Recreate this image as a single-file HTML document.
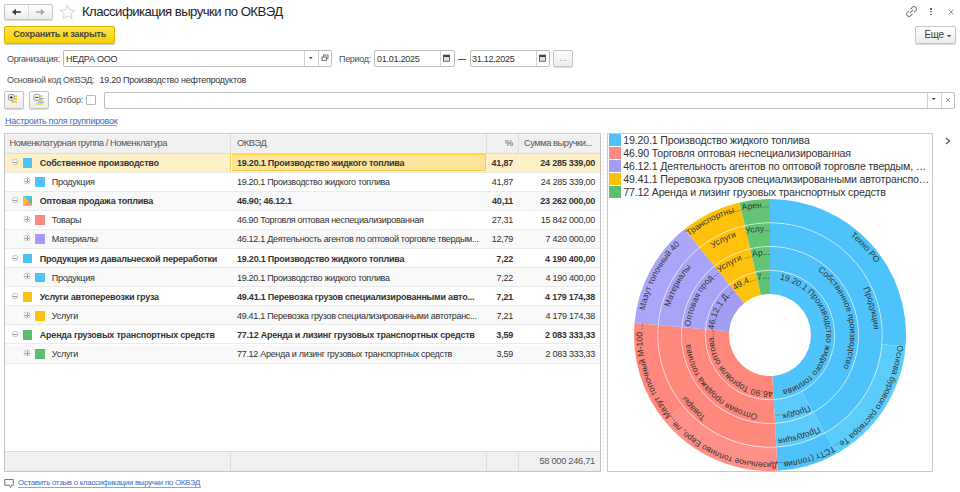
<!DOCTYPE html>
<html><head><meta charset="utf-8"><title>Классификация выручки по ОКВЭД</title>
<style>
*{box-sizing:border-box;margin:0;padding:0}
html,body{width:960px;height:492px;overflow:hidden;background:#fff}
body{position:relative;font-family:"Liberation Sans",sans-serif;color:#333;font-size:9px}
.a{position:absolute;white-space:nowrap}
.btn{position:absolute;border:1px solid #c4c4c4;border-radius:2px;background:linear-gradient(#fff,#ececec);box-shadow:0 1px 1px rgba(0,0,0,.15)}
.inp{position:absolute;border:1px solid #bdbdbd;border-radius:2px;background:#fff}
.lbl9{position:absolute;white-space:nowrap;font-size:9px;letter-spacing:-0.33px;color:#505050;line-height:1}
.txt{position:absolute;white-space:nowrap;font-size:9px;letter-spacing:-0.25px;color:#333;line-height:1}
.vd{position:absolute;top:0;bottom:0;width:1px;background:#d0d0d0}
/* table */
.tbl{position:absolute;left:4px;top:132.5px;width:597px;height:339.5px;border:1px solid #c4c4c4;border-top:1.5px solid #c8c8c8;background:#fff;overflow:hidden}
.hdr{position:absolute;left:0;top:0;width:595px;height:20px;background:#f0f0f0;border-bottom:1px solid #dcdce0;box-shadow:inset 0 1px #fafafa}
.hc{position:absolute;top:0;height:20px;border-right:1px solid #dedede}
.ht{position:absolute;top:5px;font-size:9.3px;letter-spacing:-0.45px;color:#555;line-height:1;white-space:nowrap}
.row{position:absolute;left:0;width:595px;height:19.1px;border-bottom:1px solid #ebebeb;background:#fff}
.row.alt{background:#f9f9f9}
.row.sel{background:#fef0c6}
.row>div{position:absolute;white-space:nowrap;line-height:1}
.c1,.c2,.c3,.c4{top:5.5px;font-size:9px;letter-spacing:-0.25px;color:#303030}
.b{font-weight:bold;letter-spacing:-0.22px;color:#333}
.c2{left:232px;letter-spacing:-0.3px}
.c2.b{letter-spacing:-0.22px}
.c3{right:87px;text-align:right}
.c4{right:5px;text-align:right}
.row>.cur{position:absolute;left:225px;top:0.5px;width:256px;height:16.8px;border:1.5px solid #fccf3a;background:#fde59d}
.row>.cl{position:absolute;top:0;width:1px;height:18px;background:#fbf7ea}
.sq{position:absolute;top:4.6px;width:9.6px;height:9.8px}
.tog{position:absolute;top:5.5px}
.ftr{position:absolute;left:0;top:317.4px;width:595px;height:20px;background:#f0f0f0;border-top:1px solid #d9d9d9}
/* chart */
.cbox{position:absolute;left:607px;top:132.5px;width:326px;height:339.5px;border:1px solid #c9c9c9;background:#fff}
.chart{position:absolute;left:0;top:0}
.lbl text{font-size:8.5px;fill:#333;letter-spacing:0px;text-anchor:middle}
.li{position:absolute;left:609.3px;height:12px}
.ls{position:absolute;left:0;top:0;width:11.6px;height:11.6px}
.lt{position:absolute;left:14px;top:1px;font-size:10.6px;letter-spacing:-0.17px;color:#333;white-space:nowrap;line-height:1}
</style></head><body>
<!-- nav -->
<div class="btn" style="left:4px;top:4px;width:48.5px;height:15.5px"></div>
<div class="a" style="left:28px;top:5px;width:1px;height:13.5px;background:#dcdcdc"></div>
<svg class="a" style="left:11px;top:8px" width="11" height="8" viewBox="0 0 11 8"><path d="M1,4L5,0.8V7.2Z" fill="#3c3c3c"/><path d="M4,4H9.8" stroke="#3c3c3c" stroke-width="1.6"/></svg>
<svg class="a" style="left:34.5px;top:8px" width="11" height="8" viewBox="0 0 11 8"><path d="M9.8,4L5.8,0.8V7.2Z" fill="#a8a8a8"/><path d="M1,4H6.8" stroke="#a8a8a8" stroke-width="1.6"/></svg>
<svg class="a" style="left:59px;top:4px" width="17" height="16" viewBox="0 0 17 16"><path d="M8.5,1L10.6,6L15.9,6.3L11.8,9.7L13.1,14.8L8.5,11.9L3.9,14.8L5.2,9.7L1.1,6.3L6.4,6Z" fill="none" stroke="#c4c4c4" stroke-width="0.8"/></svg>
<div class="a" style="left:82px;top:5.2px;font-size:13.2px;letter-spacing:-0.56px;color:#222;line-height:1">Классификация выручки по ОКВЭД</div>
<!-- top right icons -->
<svg class="a" style="left:905.5px;top:5.8px" width="11" height="11" viewBox="0 0 12 12"><g fill="none" stroke="#777" stroke-width="1.1"><path d="M5,3.3L6.8,1.5A1.8,1.8 0 0 1 10.5,5.2L8.7,7"/><path d="M7,8.7L5.2,10.5A1.8,1.8 0 0 1 1.5,6.8L3.3,5"/><path d="M4.2,7.8L7.8,4.2"/></g></svg>
<div class="a" style="left:930.3px;top:8.2px;width:1.6px;height:1.6px;background:#666"></div>
<div class="a" style="left:930.3px;top:10.9px;width:1.6px;height:1.6px;background:#666"></div>
<div class="a" style="left:930.3px;top:13.5px;width:1.6px;height:1.6px;background:#666"></div>
<svg class="a" style="left:947.5px;top:8.5px" width="6" height="6" viewBox="0 0 6 6"><path d="M0.6,0.6L5.4,5.4M5.4,0.6L0.6,5.4" stroke="#777" stroke-width="0.8"/></svg>
<!-- command bar -->
<div class="a" style="left:4px;top:26px;width:111px;height:17.5px;border:1px solid #d9b400;border-radius:2px;background:linear-gradient(#ffe44d,#f5d000);box-shadow:0 1px 1px rgba(0,0,0,.2)"></div>
<div class="a" style="left:13.2px;top:30.3px;font-size:9.2px;letter-spacing:-0.25px;color:#4a4a3c;line-height:1;font-weight:bold">Сохранить и закрыть</div>
<div class="btn" style="left:915px;top:26px;width:40.5px;height:17.5px"></div>
<div class="a" style="left:924.5px;top:30px;font-size:9.8px;letter-spacing:-0.3px;color:#3a3a3a;line-height:1;transform:scaleY(1.06);transform-origin:0 100%">Еще</div>
<svg class="a" style="left:947px;top:34.5px" width="4" height="2.5" viewBox="0 0 4 2.5"><path d="M0,0H4L2,2.5Z" fill="#444"/></svg>
<!-- org row -->
<div class="lbl9" style="left:7px;top:55px">Организация:</div>
<div class="inp" style="left:63px;top:50px;width:269px;height:17px"></div>
<div class="a" style="left:303.8px;top:51px;width:1px;height:15px;background:#d0d0d0"></div>
<div class="a" style="left:317.5px;top:51px;width:1px;height:15px;background:#d0d0d0"></div>
<div class="txt" style="left:66px;top:54.6px;color:#333">НЕДРА ООО</div>
<svg class="a" style="left:309.3px;top:57px" width="3.6" height="2.2" viewBox="0 0 4 2.4"><path d="M0,0H4L2,2.4Z" fill="#444"/></svg>
<svg class="a" style="left:321px;top:54px" width="8" height="8" viewBox="0 0 8 8"><g fill="none" stroke="#666" stroke-width="0.9"><rect x="2.5" y="1" width="4.5" height="3.5"/><rect x="1" y="3" width="4.5" height="3.5" fill="#fff"/></g></svg>
<div class="lbl9" style="left:339px;top:54.8px">Период:</div>
<div class="inp" style="left:374px;top:50px;width:80.5px;height:17px"></div>
<div class="a" style="left:440px;top:51px;width:1px;height:15px;background:#d0d0d0"></div>
<div class="txt" style="left:377px;top:54.6px">01.01.2025</div>
<svg class="a" style="left:443.3px;top:53.6px" width="7" height="8" viewBox="0 0 7 8"><path d="M2,0.2V1.5M5,0.2V1.5" stroke="#666" stroke-width="0.7"/><rect x="0.5" y="1.2" width="6" height="6" fill="#e6e6e6" stroke="#444" stroke-width="0.8"/><rect x="0.5" y="1.2" width="6" height="1.8" fill="#3a3a3a"/><path d="M0.8,5H6.2M3.5,3V7" stroke="#c8c8c8" stroke-width="0.5"/></svg>
<div class="a" style="left:458px;top:58.8px;width:8px;height:1px;background:#555"></div>
<div class="inp" style="left:469.5px;top:50px;width:80px;height:17px"></div>
<div class="a" style="left:536px;top:51px;width:1px;height:15px;background:#d0d0d0"></div>
<div class="txt" style="left:472px;top:54.6px">31.12.2025</div>
<svg class="a" style="left:538.8px;top:53.6px" width="7" height="8" viewBox="0 0 7 8"><path d="M2,0.2V1.5M5,0.2V1.5" stroke="#666" stroke-width="0.7"/><rect x="0.5" y="1.2" width="6" height="6" fill="#e6e6e6" stroke="#444" stroke-width="0.8"/><rect x="0.5" y="1.2" width="6" height="1.8" fill="#3a3a3a"/><path d="M0.8,5H6.2M3.5,3V7" stroke="#c8c8c8" stroke-width="0.5"/></svg>
<div class="btn" style="left:553px;top:50px;width:19.5px;height:17px"></div>
<div class="a" style="left:559.5px;top:54.5px;font-size:8px;letter-spacing:0.3px;color:#777;line-height:1">...</div>
<!-- okved main -->
<div class="lbl9" style="left:7px;top:76px">Основной код ОКВЭД:</div>
<div class="txt" style="left:99.5px;top:76px;color:#333">19.20 Производство нефтепродуктов</div>
<!-- toolbar -->
<div class="btn" style="left:4.3px;top:91px;width:19.5px;height:17.5px"></div>
<svg class="a" style="left:4px;top:91px" width="20" height="18" viewBox="0 0 20 18"><rect x="10.2" y="4.5" width="2.9" height="1.7" fill="#f2cf10"/><rect x="10.2" y="7.2" width="2.9" height="1.7" fill="#f2cf10"/><rect x="7.2" y="10" width="5.9" height="1.7" fill="#f2cf10"/><rect x="4.4" y="3.6" width="5.6" height="5.6" rx="1" fill="#fff" stroke="#8a8a8a" stroke-width="0.9"/><path d="M5.6,6.4H8.8M7.2,4.8V8" stroke="#111" stroke-width="0.9"/></svg>
<div class="btn" style="left:29.2px;top:91px;width:19.5px;height:17.5px"></div>
<svg class="a" style="left:29px;top:91px" width="20" height="18" viewBox="0 0 20 18"><rect x="11" y="4.3" width="2.8" height="1.5" fill="#f2cf10"/><rect x="11" y="6.9" width="4" height="1.1" fill="#64b5f0"/><rect x="11" y="8.2" width="2.8" height="1.5" fill="#f2cf10"/><rect x="8.9" y="10.5" width="6" height="1.3" fill="#64b5f0"/><rect x="7.6" y="12.3" width="6.3" height="1.4" fill="#f2cf10"/><path d="M7.5,9.5V13" stroke="#bbb" stroke-width="0.6"/><rect x="5" y="3.6" width="5.8" height="5.6" rx="1" fill="#fff" stroke="#8a8a8a" stroke-width="0.9"/><path d="M6.3,6.4H9.5" stroke="#111" stroke-width="0.9"/></svg>
<div class="lbl9" style="left:56px;top:96px">Отбор:</div>
<div class="a" style="left:86px;top:95px;width:9.8px;height:9.8px;border:1px solid #b5b5b5;border-radius:1px;background:#fff"></div>
<div class="inp" style="left:103.5px;top:92px;width:851.5px;height:16.5px"></div>
<div class="a" style="left:927px;top:93px;width:1px;height:14.5px;background:#d0d0d0"></div>
<div class="a" style="left:941px;top:93px;width:1px;height:14.5px;background:#d0d0d0"></div>
<svg class="a" style="left:932.4px;top:98.3px" width="3.6" height="2" viewBox="0 0 4 2.2"><path d="M0,0H4L2,2.2Z" fill="#333"/></svg>
<svg class="a" style="left:945.3px;top:96.8px" width="6" height="6" viewBox="0 0 6 6"><path d="M1,1L5,5M5,1L1,5" stroke="#666" stroke-width="0.7"/></svg>
<!-- link -->
<div class="a" style="left:5px;top:116.7px;font-size:9px;letter-spacing:-0.29px;color:#3d6cbf;line-height:1">Настроить поля группировок</div><div class="a" style="left:5px;top:125px;width:112px;height:1px;background:#8aa6d8"></div>
<!-- table -->
<div class="tbl">
 <div class="hdr">
  <div class="hc" style="left:0;width:226px"></div>
  <div class="hc" style="left:226px;width:256px"></div>
  <div class="hc" style="left:482px;width:32px"></div>
  <div class="ht" style="left:4.5px">Номенклатурная группа / Номенклатура</div>
  <div class="ht" style="left:232px">ОКВЭД</div>
  <div class="ht" style="left:500px">%</div>
  <div class="ht" style="left:519px">Сумма выручки...</div>
 </div>
 <div style="position:absolute;left:0;top:-134px">
 <div class="row sel" style="top:154.0px"><div class="cur"></div><div class="cl" style="left:225.5px"></div><div class="cl" style="left:481.5px"></div><div class="cl" style="left:513.5px"></div><svg class="tog" style="left:5.75px;top:4.5px" width="8" height="8" viewBox="0 0 8 8"><circle cx="4" cy="4" r="2.9" fill="#fff" fill-opacity="0.4" stroke="#bbb" stroke-width="0.8"/><path d="M2.3,4H5.7" stroke="#9a9a9a" stroke-width="1" shape-rendering="crispEdges"/></svg><div class="sq" style="left:17.8px;background:#4fc3f7"></div><div class="c1 b" style="left:34.8px">Собственное производство</div><div class="c2 b">19.20.1 Производство жидкого топлива</div><div class="c3 b">41,87</div><div class="c4 b">24 285 339,00</div></div><div class="row" style="top:173.1px"><svg class="tog" style="left:18.2px;top:4.3px" width="8" height="8" viewBox="0 0 8 8"><circle cx="4" cy="4" r="3" fill="none" stroke="#bbb" stroke-width="0.8"/><path d="M2.3,4H5.7M4,2.3V5.7" stroke="#9a9a9a" stroke-width="1" shape-rendering="crispEdges"/></svg><div class="sq" style="left:30.1px;background:#4fc3f7"></div><div class="c1" style="left:46.8px">Продукция</div><div class="c2">19.20.1 Производство жидкого топлива</div><div class="c3">41,87</div><div class="c4">24 285 339,00</div></div><div class="row alt" style="top:192.2px"><svg class="tog" style="left:5.75px;top:4.5px" width="8" height="8" viewBox="0 0 8 8"><circle cx="4" cy="4" r="2.9" fill="#fff" fill-opacity="0.4" stroke="#bbb" stroke-width="0.8"/><path d="M2.3,4H5.7" stroke="#9a9a9a" stroke-width="1" shape-rendering="crispEdges"/></svg><svg class="sq" style="left:17.8px" width="10" height="10" viewBox="0 0 10 10"><path d="M0,0H10L5,5Z" fill="#4fc3f7"/><path d="M10,0V10L5,5Z" fill="#5cbf6f"/><path d="M0,10H10L5,5Z" fill="#ff8a80"/><path d="M0,0V10L5,5Z" fill="#ffc107"/></svg><div class="c1 b" style="left:34.8px">Оптовая продажа топлива</div><div class="c2 b">46.90; 46.12.1</div><div class="c3 b">40,11</div><div class="c4 b">23 262 000,00</div></div><div class="row" style="top:211.3px"><svg class="tog" style="left:18.2px;top:4.3px" width="8" height="8" viewBox="0 0 8 8"><circle cx="4" cy="4" r="3" fill="none" stroke="#bbb" stroke-width="0.8"/><path d="M2.3,4H5.7M4,2.3V5.7" stroke="#9a9a9a" stroke-width="1" shape-rendering="crispEdges"/></svg><div class="sq" style="left:30.1px;background:#ff8a80"></div><div class="c1" style="left:46.8px">Товары</div><div class="c2">46.90 Торговля оптовая неспециализированная</div><div class="c3">27,31</div><div class="c4">15 842 000,00</div></div><div class="row alt" style="top:230.4px"><svg class="tog" style="left:18.2px;top:4.3px" width="8" height="8" viewBox="0 0 8 8"><circle cx="4" cy="4" r="3" fill="none" stroke="#bbb" stroke-width="0.8"/><path d="M2.3,4H5.7M4,2.3V5.7" stroke="#9a9a9a" stroke-width="1" shape-rendering="crispEdges"/></svg><div class="sq" style="left:30.1px;background:#a29ef5"></div><div class="c1" style="left:46.8px">Материалы</div><div class="c2">46.12.1 Деятельность агентов по оптовой торговле твердым...</div><div class="c3">12,79</div><div class="c4">7 420 000,00</div></div><div class="row" style="top:249.5px"><svg class="tog" style="left:5.75px;top:4.5px" width="8" height="8" viewBox="0 0 8 8"><circle cx="4" cy="4" r="2.9" fill="#fff" fill-opacity="0.4" stroke="#bbb" stroke-width="0.8"/><path d="M2.3,4H5.7" stroke="#9a9a9a" stroke-width="1" shape-rendering="crispEdges"/></svg><div class="sq" style="left:17.8px;background:#4fc3f7"></div><div class="c1 b" style="left:34.8px">Продукция из давальческой переработки</div><div class="c2 b">19.20.1 Производство жидкого топлива</div><div class="c3 b">7,22</div><div class="c4 b">4 190 400,00</div></div><div class="row alt" style="top:268.6px"><svg class="tog" style="left:18.2px;top:4.3px" width="8" height="8" viewBox="0 0 8 8"><circle cx="4" cy="4" r="3" fill="none" stroke="#bbb" stroke-width="0.8"/><path d="M2.3,4H5.7M4,2.3V5.7" stroke="#9a9a9a" stroke-width="1" shape-rendering="crispEdges"/></svg><div class="sq" style="left:30.1px;background:#4fc3f7"></div><div class="c1" style="left:46.8px">Продукция</div><div class="c2">19.20.1 Производство жидкого топлива</div><div class="c3">7,22</div><div class="c4">4 190 400,00</div></div><div class="row" style="top:287.7px"><svg class="tog" style="left:5.75px;top:4.5px" width="8" height="8" viewBox="0 0 8 8"><circle cx="4" cy="4" r="2.9" fill="#fff" fill-opacity="0.4" stroke="#bbb" stroke-width="0.8"/><path d="M2.3,4H5.7" stroke="#9a9a9a" stroke-width="1" shape-rendering="crispEdges"/></svg><div class="sq" style="left:17.8px;background:#ffc107"></div><div class="c1 b" style="left:34.8px">Услуги автоперевозки груза</div><div class="c2 b">49.41.1 Перевозка грузов специализированными авто...</div><div class="c3 b">7,21</div><div class="c4 b">4 179 174,38</div></div><div class="row alt" style="top:306.8px"><svg class="tog" style="left:18.2px;top:4.3px" width="8" height="8" viewBox="0 0 8 8"><circle cx="4" cy="4" r="3" fill="none" stroke="#bbb" stroke-width="0.8"/><path d="M2.3,4H5.7M4,2.3V5.7" stroke="#9a9a9a" stroke-width="1" shape-rendering="crispEdges"/></svg><div class="sq" style="left:30.1px;background:#ffc107"></div><div class="c1" style="left:46.8px">Услуги</div><div class="c2">49.41.1 Перевозка грузов специализированными автотранс...</div><div class="c3">7,21</div><div class="c4">4 179 174,38</div></div><div class="row" style="top:325.9px"><svg class="tog" style="left:5.75px;top:4.5px" width="8" height="8" viewBox="0 0 8 8"><circle cx="4" cy="4" r="2.9" fill="#fff" fill-opacity="0.4" stroke="#bbb" stroke-width="0.8"/><path d="M2.3,4H5.7" stroke="#9a9a9a" stroke-width="1" shape-rendering="crispEdges"/></svg><div class="sq" style="left:17.8px;background:#5cbf6f"></div><div class="c1 b" style="left:34.8px">Аренда грузовых транспортных средств</div><div class="c2 b">77.12 Аренда и лизинг грузовых транспортных средств</div><div class="c3 b">3,59</div><div class="c4 b">2 083 333,33</div></div><div class="row alt" style="top:345.0px"><svg class="tog" style="left:18.2px;top:4.3px" width="8" height="8" viewBox="0 0 8 8"><circle cx="4" cy="4" r="3" fill="none" stroke="#bbb" stroke-width="0.8"/><path d="M2.3,4H5.7M4,2.3V5.7" stroke="#9a9a9a" stroke-width="1" shape-rendering="crispEdges"/></svg><div class="sq" style="left:30.1px;background:#5cbf6f"></div><div class="c1" style="left:46.8px">Услуги</div><div class="c2">77.12 Аренда и лизинг грузовых транспортных средств</div><div class="c3">3,59</div><div class="c4">2 083 333,33</div></div>
 </div>
 <div class="ftr">
  <div class="hc" style="left:0;width:226px;height:19px"></div>
  <div class="hc" style="left:226px;width:256px;height:19px"></div>
  <div class="hc" style="left:482px;width:32px;height:19px"></div>
  <div class="ht" style="right:5px;top:5.5px;letter-spacing:-0.3px;color:#555">58 000 246,71</div>
 </div>
</div>
<!-- splitter -->
<div class="a" style="left:603px;top:133px;width:1px;height:338px;background:repeating-linear-gradient(#e2e2e2 0,#e2e2e2 2px,transparent 2px,transparent 4px)"></div>
<!-- chart box -->
<div class="cbox"></div>
<svg class="chart" width="960" height="492" viewBox="0 0 960 492"><defs><path id="p0" d="M713.63,335.62A56.375,56.375 0 1 1 713.68,337.58"/><path id="p1" d="M811.17,296.49A56.375,56.375 0 1 1 809.80,295.07"/><path id="p2" d="M819.26,362.42A56.375,56.375 0 1 1 820.18,360.68"/><path id="p3" d="M793.74,386.13A56.375,56.375 0 1 1 795.51,385.27"/><path id="p4" d="M775.37,391.12A56.375,56.375 0 1 1 777.32,390.90"/><path id="p5" d="M692.13,353.88A80.125,80.125 0 1 1 692.84,356.59"/><path id="p6" d="M748.91,257.70A80.125,80.125 0 1 1 746.23,258.48"/><path id="p7" d="M828.51,280.26A80.125,80.125 0 1 1 826.57,278.25"/><path id="p8" d="M840.01,373.97A80.125,80.125 0 1 1 841.33,371.50"/><path id="p9" d="M803.74,407.68A80.125,80.125 0 1 1 806.25,406.45"/><path id="p10" d="M777.63,414.76A80.125,80.125 0 1 1 780.41,414.45"/><path id="p11" d="M669.05,359.48A103.875,103.875 0 1 1 669.97,362.99"/><path id="p12" d="M742.66,234.79A103.875,103.875 0 1 1 739.18,235.80"/><path id="p13" d="M845.86,264.04A103.875,103.875 0 1 1 843.34,261.43"/><path id="p14" d="M860.76,385.52A103.875,103.875 0 1 1 862.47,382.32"/><path id="p15" d="M813.74,429.22A103.875,103.875 0 1 1 817.00,427.63"/><path id="p16" d="M779.89,438.40A103.875,103.875 0 1 1 783.50,437.99"/><path id="p17" d="M674.64,419.82A127.625,127.625 0 1 1 677.65,423.09"/><path id="p18" d="M663.84,264.15A127.625,127.625 0 1 1 661.44,267.90"/><path id="p19" d="M736.41,211.87A127.625,127.625 0 1 1 732.13,213.12"/><path id="p20" d="M823.48,219.12A127.625,127.625 0 1 1 819.40,217.32"/><path id="p21" d="M892.64,299.69A127.625,127.625 0 1 1 891.34,295.43"/><path id="p22" d="M881.51,397.07A127.625,127.625 0 1 1 883.61,393.14"/><path id="p23" d="M823.74,450.76A127.625,127.625 0 1 1 827.74,448.81"/><path id="p24" d="M782.16,462.04A127.625,127.625 0 1 1 786.58,461.54"/></defs><path d="M770.00,270.25A64.75,64.75 0 0 1 773.68,399.65L772.33,375.93A41,41 0 0 0 770.00,294.00Z" fill="#4fc4fa"/><path d="M773.68,399.65A64.75,64.75 0 0 1 705.50,329.27L729.16,331.37A41,41 0 0 0 772.33,375.93Z" fill="#ff877c"/><path d="M705.50,329.27A64.75,64.75 0 0 1 729.37,284.59L744.27,303.08A41,41 0 0 0 729.16,331.37Z" fill="#a29ef2"/><path d="M729.37,284.59A64.75,64.75 0 0 1 755.51,271.89L760.83,295.04A41,41 0 0 0 744.27,303.08Z" fill="#ffc20a"/><path d="M755.51,271.89A64.75,64.75 0 0 1 770.00,270.25L770.00,294.00A41,41 0 0 0 760.83,295.04Z" fill="#61c271"/><path d="M770.00,246.50A88.5,88.5 0 0 1 813.26,412.21L801.65,391.49A64.75,64.75 0 0 0 770.00,270.25Z" fill="#4ec3fb"/><path d="M813.26,412.21A88.5,88.5 0 0 1 775.02,423.36L773.68,399.65A64.75,64.75 0 0 0 801.65,391.49Z" fill="#5ccbfb"/><path d="M775.02,423.36A88.5,88.5 0 0 1 681.85,327.17L705.50,329.27A64.75,64.75 0 0 0 773.68,399.65Z" fill="#ff887c"/><path d="M681.85,327.17A88.5,88.5 0 0 1 714.46,266.10L729.37,284.59A64.75,64.75 0 0 0 705.50,329.27Z" fill="#a8a4f8"/><path d="M714.46,266.10A88.5,88.5 0 0 1 750.20,248.74L755.51,271.89A64.75,64.75 0 0 0 729.37,284.59Z" fill="#ffc10c"/><path d="M750.20,248.74A88.5,88.5 0 0 1 770.00,246.50L770.00,270.25A64.75,64.75 0 0 0 755.51,271.89Z" fill="#63c474"/><path d="M770.00,222.75A112.25,112.25 0 0 1 824.87,432.92L813.26,412.21A88.5,88.5 0 0 0 770.00,246.50Z" fill="#4ec3fb"/><path d="M824.87,432.92A112.25,112.25 0 0 1 776.37,447.07L775.02,423.36A88.5,88.5 0 0 0 813.26,412.21Z" fill="#5ccbfb"/><path d="M776.37,447.07A112.25,112.25 0 0 1 658.19,325.07L681.85,327.17A88.5,88.5 0 0 0 775.02,423.36Z" fill="#ff887c"/><path d="M658.19,325.07A112.25,112.25 0 0 1 699.56,247.61L714.46,266.10A88.5,88.5 0 0 0 681.85,327.17Z" fill="#a8a4f8"/><path d="M699.56,247.61A112.25,112.25 0 0 1 744.88,225.60L750.20,248.74A88.5,88.5 0 0 0 714.46,266.10Z" fill="#ffc10c"/><path d="M744.88,225.60A112.25,112.25 0 0 1 770.00,222.75L770.00,246.50A88.5,88.5 0 0 0 750.20,248.74Z" fill="#63c474"/><path d="M770.00,199.00A136,136 0 0 1 905.54,346.14L881.87,344.20A112.25,112.25 0 0 0 770.00,222.75Z" fill="#4ec3fb"/><path d="M905.54,346.14A136,136 0 0 1 836.48,453.64L824.87,432.92A112.25,112.25 0 0 0 881.87,344.20Z" fill="#5acdfb"/><path d="M836.48,453.64A136,136 0 0 1 777.72,470.78L776.37,447.07A112.25,112.25 0 0 0 824.87,432.92Z" fill="#4ec3fb"/><path d="M777.72,470.78A136,136 0 0 1 664.61,420.96L683.01,405.95A112.25,112.25 0 0 0 776.37,447.07Z" fill="#ff9087"/><path d="M664.61,420.96A136,136 0 0 1 634.53,322.97L658.19,325.07A112.25,112.25 0 0 0 683.01,405.95Z" fill="#ff877b"/><path d="M634.53,322.97A136,136 0 0 1 684.65,229.12L699.56,247.61A112.25,112.25 0 0 0 658.19,325.07Z" fill="#aaa6fa"/><path d="M684.65,229.12A136,136 0 0 1 739.57,202.45L744.88,225.60A112.25,112.25 0 0 0 699.56,247.61Z" fill="#ffc10c"/><path d="M739.57,202.45A136,136 0 0 1 770.00,199.00L770.00,222.75A112.25,112.25 0 0 0 744.88,225.60Z" fill="#63c474"/><circle cx="770" cy="335" r="64.75" fill="none" stroke="rgba(255,255,255,0.7)" stroke-width="0.8"/><circle cx="770" cy="335" r="88.5" fill="none" stroke="rgba(255,255,255,0.7)" stroke-width="0.8"/><circle cx="770" cy="335" r="112.25" fill="none" stroke="rgba(255,255,255,0.7)" stroke-width="0.8"/><g class="lbl"><text><textPath href="#p0" startOffset="50%">19.20.1 Производство жидкого топлива</textPath></text><text><textPath href="#p1" startOffset="50%">46.90 Торговля оптова...</textPath></text><text><textPath href="#p2" startOffset="50%">46.12.1 Д...</textPath></text><text><textPath href="#p3" startOffset="50%">49.4...</textPath></text><text><textPath href="#p4" startOffset="50%">7...</textPath></text><text><textPath href="#p5" startOffset="50%">Собственное производство</textPath></text><text><textPath href="#p6" startOffset="50%">Продук...</textPath></text><text><textPath href="#p7" startOffset="50%">Оптовая продажа топлива</textPath></text><text><textPath href="#p8" startOffset="50%">Оптовая прод...</textPath></text><text><textPath href="#p9" startOffset="50%">Услуги ...</textPath></text><text><textPath href="#p10" startOffset="50%">Ар...</textPath></text><text><textPath href="#p11" startOffset="50%">Продукция</textPath></text><text><textPath href="#p12" startOffset="50%">Продукция</textPath></text><text><textPath href="#p13" startOffset="50%">Товары</textPath></text><text><textPath href="#p14" startOffset="50%">Материалы</textPath></text><text><textPath href="#p15" startOffset="50%">Услуги</textPath></text><text><textPath href="#p16" startOffset="50%">Услу...</textPath></text><text><textPath href="#p17" startOffset="50%">Техно РО</textPath></text><text><textPath href="#p18" startOffset="50%">Основа бурового раствора Те...</textPath></text><text><textPath href="#p19" startOffset="50%">ТСТт (топлив...</textPath></text><text><textPath href="#p20" startOffset="50%">Дизельное топливо Евро, ле...</textPath></text><text><textPath href="#p21" startOffset="50%">Мазут топочный М-100 ...</textPath></text><text><textPath href="#p22" startOffset="50%">Мазут топочный 40</textPath></text><text><textPath href="#p23" startOffset="50%">Транспортны...</textPath></text><text><textPath href="#p24" startOffset="50%">Арен...</textPath></text></g></svg>
<div class="li" style="top:134.0px"><div class="ls" style="background:#4fc3f7"></div><div class="lt">19.20.1 Производство жидкого топлива</div></div><div class="li" style="top:147.1px"><div class="ls" style="background:#ff8a80"></div><div class="lt">46.90 Торговля оптовая неспециализированная</div></div><div class="li" style="top:160.2px"><div class="ls" style="background:#a29ef5"></div><div class="lt">46.12.1 Деятельность агентов по оптовой торговле твердым, …</div></div><div class="li" style="top:173.3px"><div class="ls" style="background:#ffc107"></div><div class="lt">49.41.1 Перевозка грузов специализированными автотранспо…</div></div><div class="li" style="top:186.4px"><div class="ls" style="background:#5cbf6f"></div><div class="lt">77.12 Аренда и лизинг грузовых транспортных средств</div></div>
<svg class="a" style="left:944.5px;top:137px" width="6" height="8" viewBox="0 0 6 8"><path d="M1,1L4.5,4L1,7" fill="none" stroke="#555" stroke-width="1.2"/></svg>
<!-- footer link -->
<svg class="a" style="left:4px;top:478px" width="11" height="11" viewBox="0 0 11 11"><path d="M0.8,1.5H9.3V7.3H7.6L6.6,9.6L5.4,7.3H0.8Z" fill="none" stroke="#666" stroke-width="0.9" stroke-linejoin="round"/></svg>
<div class="a" style="left:18px;top:479.3px;font-size:7.8px;letter-spacing:-0.24px;color:#3d6cbf;line-height:1">Оставить отзыв о классификации выручки по ОКВЭД</div><div class="a" style="left:18px;top:486.7px;width:183px;height:1px;background:#8aa6d8"></div>
</body></html>
